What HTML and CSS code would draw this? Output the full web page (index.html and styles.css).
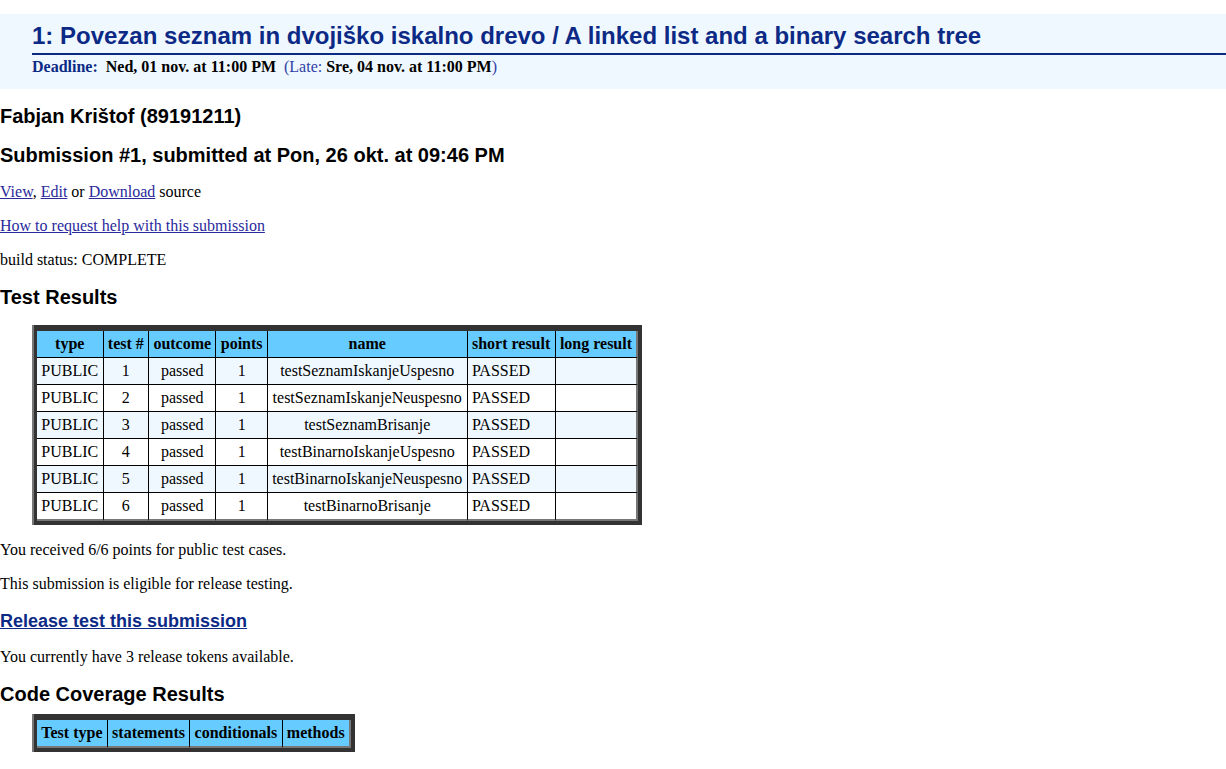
FILE: index.html
```html
<!DOCTYPE html>
<html>
<head>
<meta charset="utf-8">
<title>Submission</title>
<link rel="stylesheet" href="styles.css">
</head>
<body>
<div class="header">
  <h1 class="title">1: Povezan seznam in dvojiško iskalno drevo / A linked list and a binary search tree</h1>
  <div class="deadline"><span class="dl-label">Deadline:</span>&nbsp; <b>Ned, 01 nov. at 11:00 PM</b>&nbsp; <span class="late">(Late: <b class="black">Sre, 04 nov. at 11:00 PM</b>)</span></div>
</div>

<h2 class="heading">Fabjan Krištof (89191211)</h2>
<h2 class="heading">Submission #1, submitted at Pon, 26 okt. at 09:46 PM</h2>

<p class="para"><a class="link" href="#">View</a>, <a class="link" href="#">Edit</a> or <a class="link" href="#">Download</a> source</p>
<p class="para"><a class="link" href="#">How to request help with this submission</a></p>
<p class="para">build status: COMPLETE</p>

<h2 class="heading spaced">Test Results</h2>
<table class="results">
  <tr>
    <th>type</th><th>test #</th><th>outcome</th><th>points</th><th>name</th><th>short result</th><th>long result</th>
  </tr>
  <tr class="odd">
    <td>PUBLIC</td><td class="c">1</td><td class="c">passed</td><td class="c">1</td><td class="c">testSeznamIskanjeUspesno</td><td>PASSED</td><td></td>
  </tr>
  <tr>
    <td>PUBLIC</td><td class="c">2</td><td class="c">passed</td><td class="c">1</td><td class="c">testSeznamIskanjeNeuspesno</td><td>PASSED</td><td></td>
  </tr>
  <tr class="odd">
    <td>PUBLIC</td><td class="c">3</td><td class="c">passed</td><td class="c">1</td><td class="c">testSeznamBrisanje</td><td>PASSED</td><td></td>
  </tr>
  <tr>
    <td>PUBLIC</td><td class="c">4</td><td class="c">passed</td><td class="c">1</td><td class="c">testBinarnoIskanjeUspesno</td><td>PASSED</td><td></td>
  </tr>
  <tr class="odd">
    <td>PUBLIC</td><td class="c">5</td><td class="c">passed</td><td class="c">1</td><td class="c">testBinarnoIskanjeNeuspesno</td><td>PASSED</td><td></td>
  </tr>
  <tr>
    <td>PUBLIC</td><td class="c">6</td><td class="c">passed</td><td class="c">1</td><td class="c">testBinarnoBrisanje</td><td>PASSED</td><td></td>
  </tr>
</table>

<p class="para">You received 6/6 points for public test cases.</p>
<p class="para">This submission is eligible for release testing.</p>
<h3 class="release"><a class="release-link" href="#">Release test this submission</a></h3>
<p class="para">You currently have 3 release tokens available.</p>

<h2 class="heading spaced tight">Code Coverage Results</h2>
<table class="results coverage">
  <tr>
    <th>Test type</th><th>statements</th><th>conditionals</th><th>methods</th>
  </tr>
</table>
</body>
</html>
```
FILE: styles.css
```css
html, body {
  margin: 0;
  padding: 0;
  background: #ffffff;
}

body {
  font-family: "Liberation Serif", "Times New Roman", serif;
  font-size: 16px;
  color: #000;
}

.header {
  margin-top: 14px;
  background: #f0f8ff;
  padding: 8px 0 13px 32px;
}

.title {
  margin: 0;
  font-family: "Liberation Sans", Arial, sans-serif;
  font-size: 24px;
  line-height: 28px;
  font-weight: bold;
  color: #0c2a85;
  border-bottom: 2px solid #0c2a85;
  padding-bottom: 3px;
}

.deadline {
  margin-top: 3px;
  font-weight: bold;
}

.dl-label {
  color: #0c2a85;
}

.late {
  color: #2f3fa8;
  font-weight: normal;
}

.late .black {
  color: #000;
  font-weight: bold;
}

.heading {
  font-family: "Liberation Sans", Arial, sans-serif;
  font-size: 20px;
  font-weight: bold;
  margin: 16px 0;
}

.heading.spaced {
  margin-top: 17px;
}

.heading.tight {
  margin-bottom: 8px;
}

.para {
  margin: 16px 0;
}

.link {
  color: #2a2a9c;
}

.release {
  font-family: "Liberation Sans", Arial, sans-serif;
  font-size: 18px;
  font-weight: bold;
  margin: 18px 0 16px;
}

.release-link {
  color: #0c2a85;
}

.results {
  border-collapse: separate;
  border-spacing: 0;
  border-style: solid;
  border-color: #333;
  border-width: 6px 4px 4px 3px;
  box-shadow: -2px 0 0 #777;
  margin: 16px 0 16px 34px;
}

.results.coverage {
  margin-top: 0;
}

.results th,
.results td {
  padding: 4px 4.3px;
  line-height: 18px;
  border-right: 1px solid #000;
  border-bottom: 1px solid #000;
  text-align: left;
}

.results th {
  background: #66ccff;
  text-align: center;
  font-weight: bold;
}

.results td.c {
  text-align: center;
}

.results tr.odd td {
  background: #f0f8ff;
}

.results tr > :last-child {
  border-right: 2px solid #777;
}

.results tr:last-child > * {
  border-bottom: 2px solid #777;
}
```
